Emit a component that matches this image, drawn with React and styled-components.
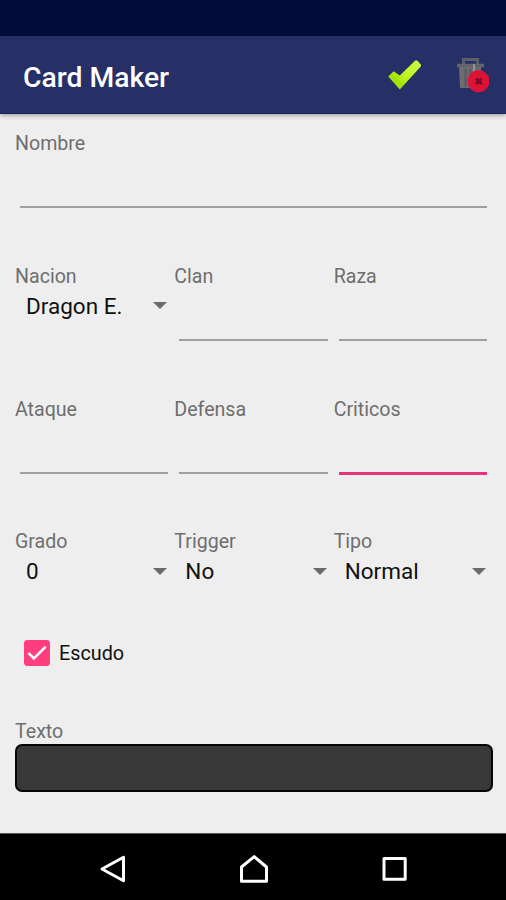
import React, { useState } from 'react'
import styled, { createGlobalStyle } from 'styled-components'

const DeleteIcon = () => (
  <svg width='36' height='38' viewBox='0 0 36 38'>
    <path d='M4 9.5h27' stroke='#62636c' strokeWidth='3.5' />
    <path d='M10.5 8V3.5h14V8' fill='none' stroke='#5d5f6c' strokeWidth='3' />
    <path d='M6 11h22v21H7z' fill='#6b6b70' />
    <path d='M12.5 13v18M17.5 13v18' stroke='#595960' strokeWidth='2' />
    <path d='M21 8v11' stroke='#92929a' strokeWidth='2' />
    <circle cx='25.5' cy='25.2' r='11' fill='#dc1237' />
    <path d='M23 22.5l5.5 5.5M28.5 22.5l-5.5 5.5' stroke='#7d0a28' strokeWidth='3' />
  </svg>
)

const AcceptIcon = () => (
  <svg width='36' height='32' viewBox='0 0 36 32'>
    <defs>
      <linearGradient id='lime' x1='0' y1='1' x2='1' y2='0'>
        <stop offset='0.3' stopColor='#a2e408' />
        <stop offset='0.45' stopColor='#c0f222' />
        <stop offset='1' stopColor='#c8fa4a' />
      </linearGradient>
    </defs>
    <path d='M33.5 4l2 3-2 1z' fill='#101a48' />
    <path
      d='M1.3 17.5l5.3-5.2 6.2 4.2L28 1.8q1.2-1 2.4 0l3.6 4q.6 1-.2 1.8L12.8 30.6z'
      fill='url(#lime)'
    />
  </svg>
)

const TextField = ({ label, active }) => (
  <Field>
    <Label>{label}</Label>
    <Input aria-label={label} $active={active} />
  </Field>
)

const SelectField = ({ label, value }) => (
  <Field>
    <Label>{label}</Label>
    <Spinner type='button'>
      {value}
      <Arrow />
    </Spinner>
  </Field>
)

const App = () => {
  const [shield, setShield] = useState(true)

  return (
    <Screen>
      <GlobalStyle />
      <StatusBar />
      <Toolbar>
        <Title>Card Maker</Title>
        <Action aria-label='Guardar'>
          <AcceptIcon />
        </Action>
        <Action aria-label='Borrar'>
          <DeleteIcon />
        </Action>
      </Toolbar>
      <Form>
        <Row>
          <TextField label='Nombre' />
        </Row>
        <Row>
          <SelectField label='Nacion' value='Dragon E.' />
          <TextField label='Clan' />
          <TextField label='Raza' />
        </Row>
        <Row>
          <TextField label='Ataque' />
          <TextField label='Defensa' />
          <TextField label='Criticos' active />
        </Row>
        <Row $height='111px'>
          <SelectField label='Grado' value='0' />
          <SelectField label='Trigger' value='No' />
          <SelectField label='Tipo' value='Normal' />
        </Row>
        <CheckRow type='button' onClick={() => setShield(!shield)}>
          <Box $checked={shield}>
            {shield && (
              <svg width='24' height='24' viewBox='0 0 25 25'>
                <path
                  d='M3.5 12.3l5.8 5.8L21.5 5.8'
                  fill='none'
                  stroke='#fff'
                  strokeWidth='2.6'
                />
              </svg>
            )}
          </Box>
          Escudo
        </CheckRow>
        <Label>Texto</Label>
        <TextBox aria-label='Texto' />
      </Form>
      <NavBar>
        <svg width='28' height='30' viewBox='0 0 28 30'>
          <path d='M3 15L24.5 3.2v23.6z' />
        </svg>
        <svg width='30' height='30' viewBox='0 0 30 30'>
          <path d='M2.5 27.2V13L15.2 2.6 27.5 13v14.2z' />
        </svg>
        <svg width='28' height='30' viewBox='0 0 28 30'>
          <path d='M4 4.5h21.2v20.8H4z' />
        </svg>
      </NavBar>
    </Screen>
  )
}

const GlobalStyle = createGlobalStyle`
  * {
    box-sizing: border-box;
  }

  body {
    margin: 0;
    background: #eee;
    font-family: Roboto, sans-serif;
  }

  button, input, textarea {
    border: 0;
    margin: 0;
    padding: 0;
    background: none;
    font-family: inherit;
    outline: none;
  }

  svg {
    display: block;
  }
`

const Screen = styled.div`
  display: flex;
  flex-direction: column;
  width: 506px;
  height: 900px;
  overflow: hidden;
  background: #eee;
`

const StatusBar = styled.div`
  height: 36px;
  background: #040c3b;
`

const Toolbar = styled.header`
  display: flex;
  align-items: center;
  height: 78px;
  padding: 0 16px 0 23px;
  background: #262f66;
  border-bottom: 1px solid #1b2459;
  box-shadow: 0 1px 5px rgba(0, 0, 0, 0.4);
`

const Title = styled.h1`
  flex: 1;
  margin: 0;
  padding-top: 6px;
  color: #fff;
  font-size: 28.3px;
  font-weight: 500;
  line-height: 32px;
`

const Action = styled.button`
  display: flex;
  justify-content: center;
  width: 38px;

  & + & {
    margin-left: 28px;
  }
`

const Form = styled.main`
  flex: 1;
  padding: 17px 13px 0 15px;
`

const Row = styled.div`
  display: flex;
  height: ${({ $height }) => $height || '132.8px'};
`

const Field = styled.div`
  flex: 1 1 0;
  min-width: 0;
`

const Label = styled.div`
  padding-top: 1px;
  color: #6e6e6e;
  font-size: 19.6px;
  line-height: 24px;
`

const Input = styled.input`
  display: block;
  width: calc(100% - 11px);
  height: ${({ $active }) => ($active ? '53px' : '52px')};
  margin: 0 5px;
  font-size: 22px;
  border-bottom: ${({ $active }) =>
    $active ? '3px solid #e9307a' : '2px solid #a0a0a0'};
`

const Spinner = styled.button`
  display: flex;
  align-items: center;
  justify-content: space-between;
  width: 100%;
  height: 34px;
  padding: 0 7px 0 11px;
  color: #111;
  font-size: 22.5px;
`

const Arrow = styled.span`
  border: 7px solid transparent;
  border-top-color: #6b6b6b;
  border-bottom: 0;
`

const CheckRow = styled.button`
  display: flex;
  align-items: center;
  gap: 9px;
  height: 26px;
  margin: 0 0 53px 9px;
  color: #111;
  font-size: 19.8px;
`

const Box = styled.span`
  width: 26px;
  height: 26px;
  border-radius: 3px;
  background: ${({ $checked }) => ($checked ? '#ff3d7f' : 'transparent')};
  border: 1px solid ${({ $checked }) => ($checked ? '#ff3d7f' : '#777')};
`

const TextBox = styled.textarea`
  display: block;
  width: 478px;
  height: 48px;
  padding: 8px;
  resize: none;
  color: #fff;
  font-size: 20px;
  background: #383838;
  border: 2px solid #060606;
  border-radius: 7px;
`

const NavBar = styled.nav`
  display: flex;
  justify-content: space-between;
  height: 67px;
  padding: 20px 98px 0 99px;
  background: #000;
  border-top: 1px solid #555;

  path {
    fill: none;
    stroke: #fff;
    stroke-width: 3;
    stroke-linejoin: round;
  }
`

export default App
